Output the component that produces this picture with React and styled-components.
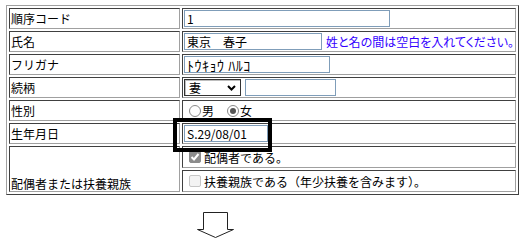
import React from 'react';
import styled, { createGlobalStyle } from 'styled-components';

const GlobalStyle = createGlobalStyle`
  body {
    margin: 0;
    background: #fff;
    font-family: "Noto Sans CJK JP", "Noto Sans", sans-serif;
    font-size: 12px;
    color: #000;
  }
`;

const Page = styled.div`
  position: relative;
  box-sizing: border-box;
  width: 528px;
  height: 252px;
  padding: 5px 0 0 6px;
  overflow: hidden;
`;

const FormTable = styled.table`
  width: 513px;
  table-layout: fixed;
  border-collapse: separate;
  border-spacing: 2px;
  border: 1px solid;
  border-color: #a0a0a0 #404040 #404040 #a0a0a0;
`;

const LabelCell = styled.td`
  box-sizing: border-box;
  width: 171px;
  padding: ${p => (p.$bottom ? '1px 1px 0' : '1px')};
  border: 1px solid;
  border-color: #404040 #a0a0a0 #a0a0a0 #404040;
  line-height: ${p => (p.$bottom ? 14 : 17)}px;
  vertical-align: ${p => (p.$bottom ? 'bottom' : 'middle')};
  white-space: nowrap;
`;

const ValueCell = styled.td`
  box-sizing: border-box;
  padding: 1px;
  border: 1px solid;
  border-color: #404040 #a0a0a0 #a0a0a0 #404040;
  line-height: 17px;
  vertical-align: middle;
`;

const Line = styled.div`
  display: flex;
  align-items: center;
  height: ${p => p.$h || 17}px;
  white-space: nowrap;
`;

const TextBox = styled.input`
  box-sizing: border-box;
  width: ${p => p.$w}px;
  height: 17px;
  margin: 0 0 0 ${p => p.$ml || 0}px;
  padding: 0 0 0 2px;
  border: 1px solid #7f9db9;
  background: #fff;
  color: #000;
  font-family: "Noto Sans CJK JP", sans-serif;
  font-size: ${p => p.$fs || 12}px;
  letter-spacing: ${p => p.$ls || 0}px;
  outline: none;
`;

const Hint = styled.span`
  margin-left: 4px;
  color: #3300ff;
  font-feature-settings: "palt";
`;

const SelectBox = styled.div`
  box-sizing: border-box;
  display: flex;
  align-items: center;
  justify-content: space-between;
  width: 57px;
  height: 17px;
  padding: 0 4px 0 4px;
  border: 1px solid #333;
  box-shadow: inset 1px 1px 0 #bdbdbd;
  background: #fff;
`;

const Radio = styled.span`
  box-sizing: border-box;
  display: inline-flex;
  align-items: center;
  justify-content: center;
  width: 12px;
  height: 12px;
  margin: 0 1px 0 ${p => p.$ml}px;
  border: 1px solid #8a8a8a;
  border-radius: 50%;
  background: #fff;

  &::after {
    content: '';
    width: 6px;
    height: 6px;
    border-radius: 50%;
    background: ${p => (p.$checked ? '#555' : 'transparent')};
  }
`;

const Check = styled.span`
  box-sizing: border-box;
  display: inline-flex;
  align-items: center;
  justify-content: center;
  width: 12px;
  height: 12px;
  margin: 0 3px 0 5px;
  border: 1px solid ${p => (p.$checked ? '#8c8c8c' : '#c6c6c6')};
  border-radius: 2px;
  background: ${p => (p.$checked ? '#8c8c8c' : '#f3f3f3')};
`;

const Callout = styled.div`
  position: absolute;
  left: 173px;
  top: 118px;
  box-sizing: border-box;
  width: 99px;
  height: 34px;
  border: 4px solid #000;
`;

const ArrowWrap = styled.div`
  display: flex;
  padding: 15px 0 0 190px;
`;

const Chevron = () => (
  <svg width="9" height="6" viewBox="0 0 9 6">
    <path d="M1 1 L4.5 4.5 L8 1" fill="none" stroke="#000" strokeWidth="2" />
  </svg>
);

const Tick = () => (
  <svg width="10" height="10" viewBox="0 0 10 10">
    <path d="M1.5 5 L4 7.5 L8.5 2" fill="none" stroke="#fff" strokeWidth="2" />
  </svg>
);

const DownArrow = () => (
  <svg width="40" height="30" viewBox="0 0 40 30">
    <polygon
      points="7.5,2.5 31.5,2.5 31.5,19.5 37.5,19.5 19.5,27.5 1.5,19.5 7.5,19.5"
      fill="#fff"
      stroke="#222"
      strokeWidth="1"
    />
  </svg>
);

const App = () => (
  <>
    <GlobalStyle />
    <Page>
      <FormTable>
        <tbody>
          <tr>
            <LabelCell>順序コード</LabelCell>
            <ValueCell>
              <Line><TextBox $w={206} defaultValue="1" readOnly /></Line>
            </ValueCell>
          </tr>
          <tr>
            <LabelCell>氏名</LabelCell>
            <ValueCell>
              <Line>
                <TextBox $w={141} defaultValue="東京　春子" readOnly />
                <Hint>姓と名の間は空白を入れてください。</Hint>
              </Line>
            </ValueCell>
          </tr>
          <tr>
            <LabelCell>フリガナ</LabelCell>
            <ValueCell>
              <Line><TextBox $w={146} $fs={14} $ls={0.5} defaultValue="ﾄｳｷｮｳ ﾊﾙｺ" readOnly /></Line>
            </ValueCell>
          </tr>
          <tr>
            <LabelCell>続柄</LabelCell>
            <ValueCell>
              <Line>
                <SelectBox>妻<Chevron /></SelectBox>
                <TextBox $w={91} $ml={4} defaultValue="" readOnly />
              </Line>
            </ValueCell>
          </tr>
          <tr>
            <LabelCell>性別</LabelCell>
            <ValueCell>
              <Line>
                <Radio $ml={5} />男
                <Radio $ml={13} $checked />女
              </Line>
            </ValueCell>
          </tr>
          <tr>
            <LabelCell>生年月日</LabelCell>
            <ValueCell>
              <Line><TextBox $w={84} defaultValue="S.29/08/01" readOnly /></Line>
            </ValueCell>
          </tr>
          <tr>
            <LabelCell rowSpan={2} $bottom>配偶者または扶養親族</LabelCell>
            <ValueCell>
              <Line $h={18}><Check $checked><Tick /></Check>配偶者である。</Line>
            </ValueCell>
          </tr>
          <tr>
            <ValueCell>
              <Line $h={18}><Check />扶養親族である（年少扶養を含みます）。</Line>
            </ValueCell>
          </tr>
        </tbody>
      </FormTable>
      <ArrowWrap>
        <DownArrow />
      </ArrowWrap>
      <Callout />
    </Page>
  </>
);

export default App;
